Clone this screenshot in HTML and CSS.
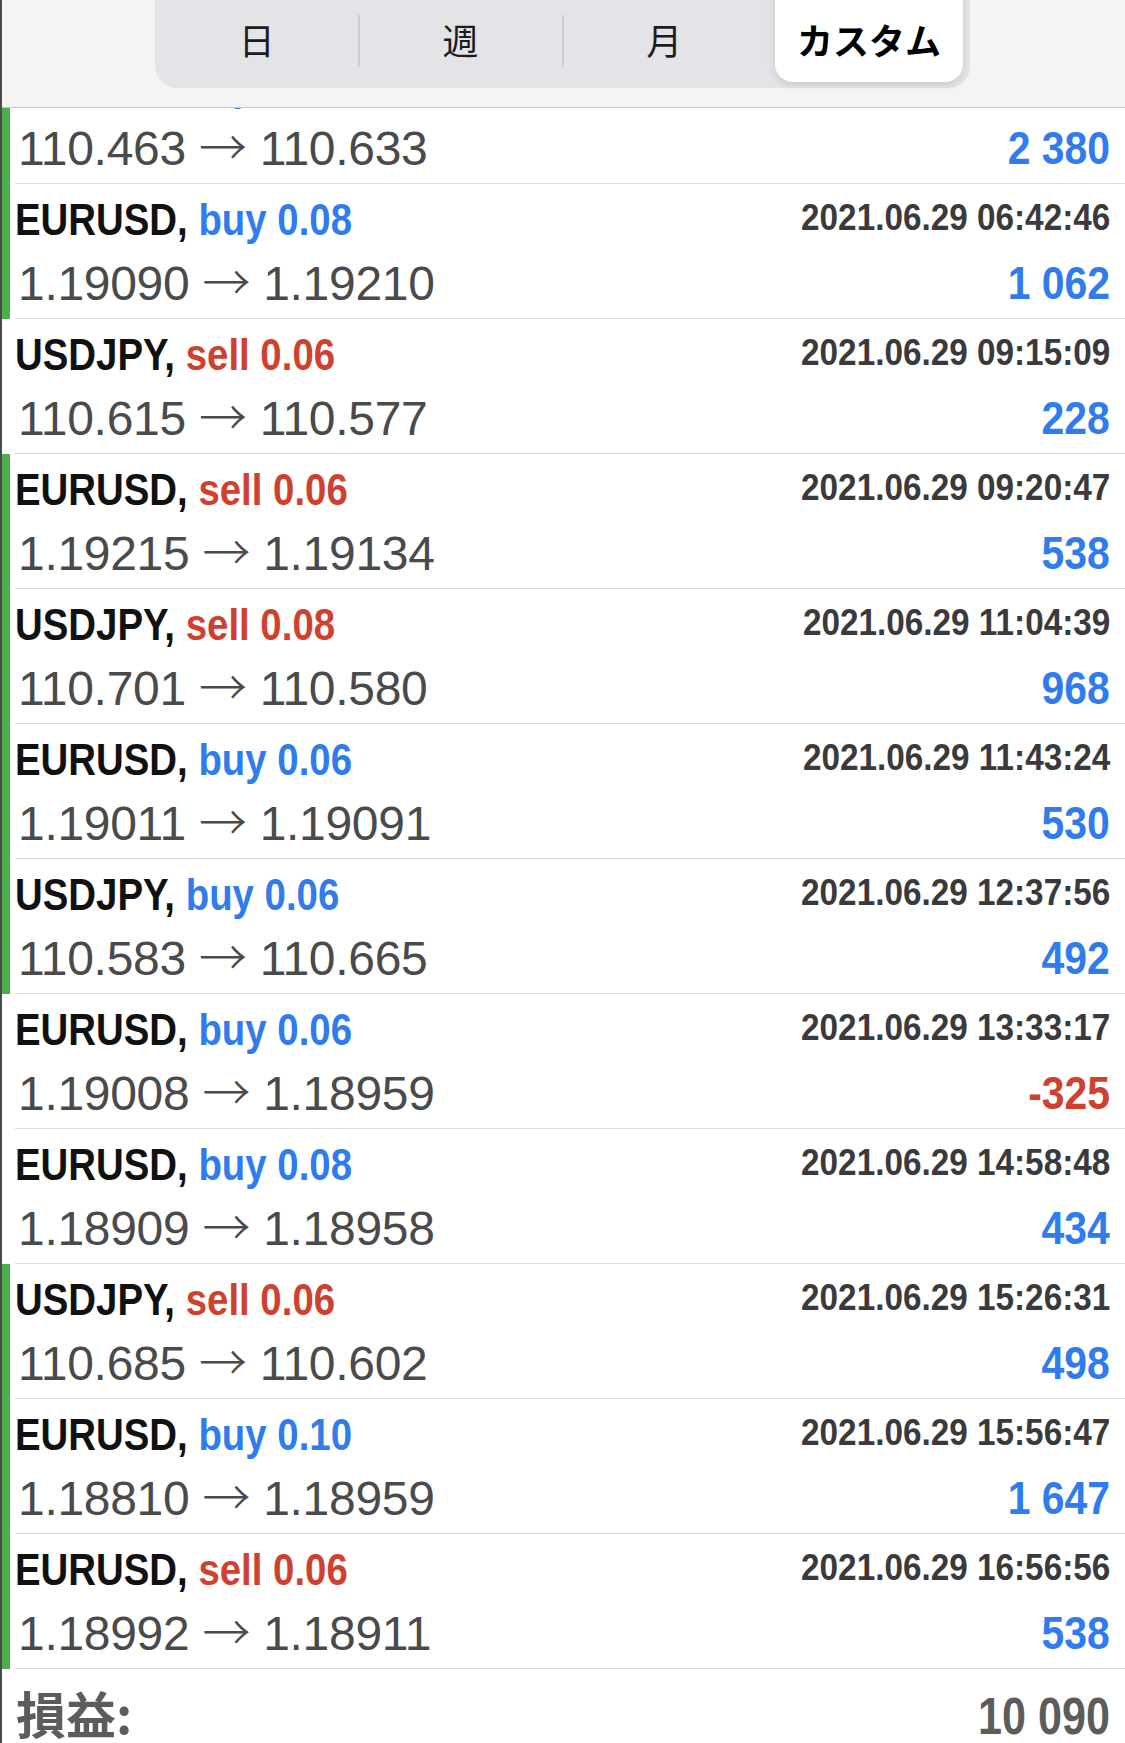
FILE: index.html
```html
<!DOCTYPE html>
<html lang="ja">
<head>
  <meta charset="UTF-8">
  <meta name="viewport" content="width=device-width, initial-scale=1.0">
  <title>取引履歴</title>
  <link rel="stylesheet" href="styles.css">
</head>
<body>
  <div class="screen">
    <div class="header">
      <div class="segments">
        <div class="segment split">日</div>
        <div class="segment split">週</div>
        <div class="segment">月</div>
        <div class="segment active">カスタム</div>
      </div>
    </div>

    <div class="list">
      <div class="trade marked">
        <div class="trade-body">
          <div class="pair"><span>USDJPY, <b class="buy">buy 0.14</b></span></div>
          <div class="time"><span>2021.06.29 03:12:05</span></div>
          <div class="price">110.463 <span class="arrow">→</span> 110.633</div>
          <div class="profit"><span>2 380</span></div>
        </div>
      </div>
      <div class="trade marked">
        <div class="trade-body">
          <div class="pair"><span>EURUSD, <b class="buy">buy 0.08</b></span></div>
          <div class="time"><span>2021.06.29 06:42:46</span></div>
          <div class="price">1.19090 <span class="arrow">→</span> 1.19210</div>
          <div class="profit"><span>1 062</span></div>
        </div>
      </div>
      <div class="trade">
        <div class="trade-body">
          <div class="pair"><span>USDJPY, <b class="sell">sell 0.06</b></span></div>
          <div class="time"><span>2021.06.29 09:15:09</span></div>
          <div class="price">110.615 <span class="arrow">→</span> 110.577</div>
          <div class="profit"><span>228</span></div>
        </div>
      </div>
      <div class="trade marked">
        <div class="trade-body">
          <div class="pair"><span>EURUSD, <b class="sell">sell 0.06</b></span></div>
          <div class="time"><span>2021.06.29 09:20:47</span></div>
          <div class="price">1.19215 <span class="arrow">→</span> 1.19134</div>
          <div class="profit"><span>538</span></div>
        </div>
      </div>
      <div class="trade marked">
        <div class="trade-body">
          <div class="pair"><span>USDJPY, <b class="sell">sell 0.08</b></span></div>
          <div class="time"><span>2021.06.29 11:04:39</span></div>
          <div class="price">110.701 <span class="arrow">→</span> 110.580</div>
          <div class="profit"><span>968</span></div>
        </div>
      </div>
      <div class="trade marked">
        <div class="trade-body">
          <div class="pair"><span>EURUSD, <b class="buy">buy 0.06</b></span></div>
          <div class="time"><span>2021.06.29 11:43:24</span></div>
          <div class="price">1.19011 <span class="arrow">→</span> 1.19091</div>
          <div class="profit"><span>530</span></div>
        </div>
      </div>
      <div class="trade marked">
        <div class="trade-body">
          <div class="pair"><span>USDJPY, <b class="buy">buy 0.06</b></span></div>
          <div class="time"><span>2021.06.29 12:37:56</span></div>
          <div class="price">110.583 <span class="arrow">→</span> 110.665</div>
          <div class="profit"><span>492</span></div>
        </div>
      </div>
      <div class="trade">
        <div class="trade-body">
          <div class="pair"><span>EURUSD, <b class="buy">buy 0.06</b></span></div>
          <div class="time"><span>2021.06.29 13:33:17</span></div>
          <div class="price">1.19008 <span class="arrow">→</span> 1.18959</div>
          <div class="profit loss"><span>-325</span></div>
        </div>
      </div>
      <div class="trade">
        <div class="trade-body">
          <div class="pair"><span>EURUSD, <b class="buy">buy 0.08</b></span></div>
          <div class="time"><span>2021.06.29 14:58:48</span></div>
          <div class="price">1.18909 <span class="arrow">→</span> 1.18958</div>
          <div class="profit"><span>434</span></div>
        </div>
      </div>
      <div class="trade marked">
        <div class="trade-body">
          <div class="pair"><span>USDJPY, <b class="sell">sell 0.06</b></span></div>
          <div class="time"><span>2021.06.29 15:26:31</span></div>
          <div class="price">110.685 <span class="arrow">→</span> 110.602</div>
          <div class="profit"><span>498</span></div>
        </div>
      </div>
      <div class="trade marked">
        <div class="trade-body">
          <div class="pair"><span>EURUSD, <b class="buy">buy 0.10</b></span></div>
          <div class="time"><span>2021.06.29 15:56:47</span></div>
          <div class="price">1.18810 <span class="arrow">→</span> 1.18959</div>
          <div class="profit"><span>1 647</span></div>
        </div>
      </div>
      <div class="trade marked">
        <div class="trade-body">
          <div class="pair"><span>EURUSD, <b class="sell">sell 0.06</b></span></div>
          <div class="time"><span>2021.06.29 16:56:56</span></div>
          <div class="price">1.18992 <span class="arrow">→</span> 1.18911</div>
          <div class="profit"><span>538</span></div>
        </div>
      </div>

      <div class="total">
        <div class="total-label">損益:</div>
        <div class="total-value"><span>10 090</span></div>
      </div>
    </div>
  </div>
</body>
</html>
```

FILE: styles.css
```css
body {
  margin: 0;
  background: #fff;
  font-family: "Liberation Sans", Arial, sans-serif;
}

.screen {
  height: 100vh;
  overflow: hidden;
  border-left: 2px solid #4a4a4a;
}

/* top period switcher */
.header {
  height: 107px;
  overflow: hidden;
  background: #f4f4f5;
  border-bottom: 1px solid #c8c8cc;
}

.segments {
  display: grid;
  grid-template-columns: repeat(4, 1fr);
  width: 815px;
  height: 112px;
  margin: -30px 0 0 153px;
  padding-bottom: 6px;
  border-radius: 22px;
  background: #e4e4e8;
}

.segment {
  position: relative;
  display: flex;
  align-items: center;
  justify-content: center;
  padding-top: 25px;
  font-family: "Noto Sans CJK JP", sans-serif;
  font-size: 36px;
  color: #1c1c1e;
}

.segment.split::after {
  content: "";
  position: absolute;
  right: -1px;
  bottom: 15px;
  width: 2px;
  height: 52px;
  background: #cdcdd2;
}

.segment.active {
  margin: 0 7px 0 9px;
  border-radius: 18px;
  background: #fff;
  box-shadow: 0 3px 8px rgba(0, 0, 0, 0.12);
  font-weight: 700;
  color: #000;
}

/* deal rows */
.list {
  overflow: hidden;
}

.trade {
  padding-left: 8px;
}

.trade:first-child {
  margin-top: -59px;
}

.trade.marked {
  margin-left: -2px;
  padding-left: 0;
  border-left: 10px solid #4cae4f;
}

.trade-body {
  display: grid;
  grid-template-columns: 1fr auto;
  grid-template-rows: 60px 68px;
  margin-left: 5px;
  padding: 6px 15px 0 0;
  border-bottom: 1px solid #dcdcde;
  white-space: nowrap;
}

.pair {
  font-size: 45px;
  font-weight: bold;
  line-height: 60px;
  color: #111;
}

.pair span {
  display: inline-block;
  transform: scaleX(0.853);
  transform-origin: left center;
}

.buy {
  color: #307cec;
}

.sell {
  color: #d0402f;
}

.time {
  align-self: start;
  font-size: 36px;
  font-weight: bold;
  line-height: 55px;
  text-align: right;
  color: #3a3a3c;
}

.time span {
  display: inline-block;
  transform: scaleX(0.925);
  transform-origin: right center;
}

.price {
  padding-left: 3px;
  font-size: 48px;
  line-height: 68px;
  letter-spacing: -0.3px;
  color: #4a4a4c;
}

.arrow {
  font-family: "Noto Sans CJK JP", sans-serif;
  font-weight: 300;
  line-height: 1;
}

.profit {
  font-size: 46px;
  font-weight: bold;
  line-height: 66px;
  text-align: right;
  color: #307cec;
}

.profit span {
  display: inline-block;
  transform: scaleX(0.89);
  transform-origin: right center;
}

.profit.loss {
  color: #d0402f;
}

/* summary */
.total {
  display: flex;
  justify-content: space-between;
  align-items: baseline;
  padding: 13px 15px 0 14px;
  color: #5c5c5c;
}

.total-label {
  font-family: "Noto Sans CJK JP", sans-serif;
  font-size: 50px;
  font-weight: bold;
  line-height: 60px;
}

.total-value {
  font-size: 52px;
  font-weight: bold;
  line-height: 60px;
}

.total-value span {
  display: inline-block;
  transform: scaleX(0.83);
  transform-origin: right center;
}
```
